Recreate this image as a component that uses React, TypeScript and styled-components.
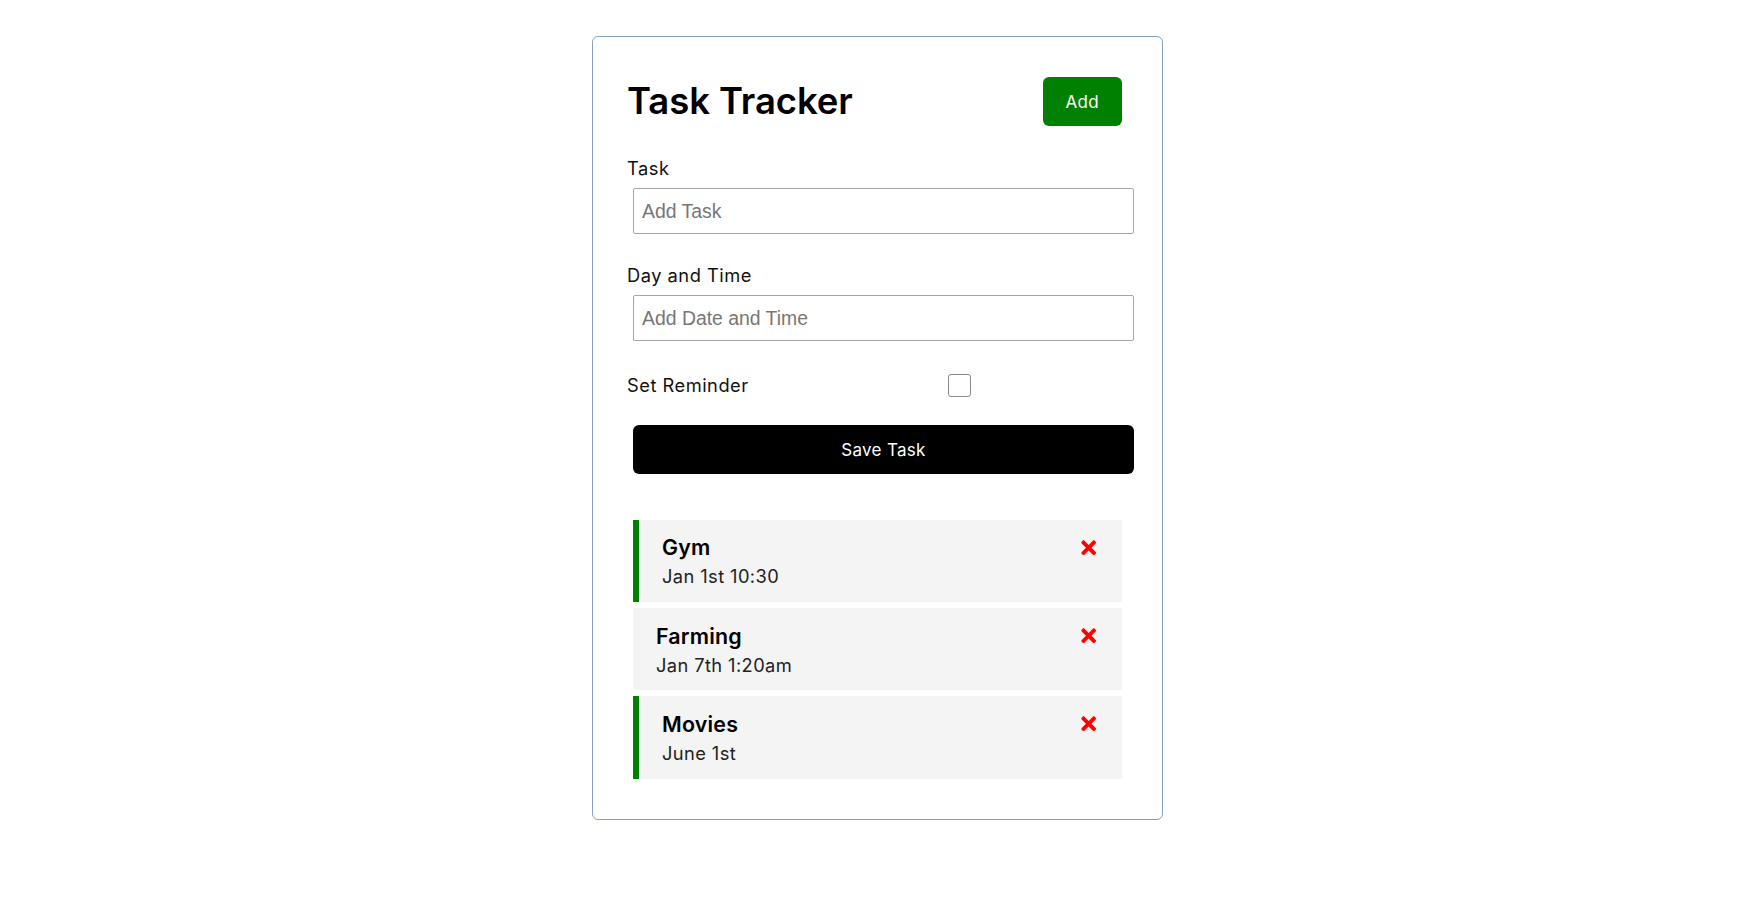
import styled, { createGlobalStyle } from "styled-components";
import { FaTimes } from "react-icons/fa";

type Task = {
  id: number;
  text: string;
  day: string;
  reminder: boolean;
};

const tasks: Task[] = [
  { id: 1, text: "Gym", day: "Jan 1st 10:30", reminder: true },
  { id: 2, text: "Farming", day: "Jan 7th 1:20am", reminder: false },
  { id: 3, text: "Movies", day: "June 1st", reminder: true },
];

const App = () => {
  return (
    <>
      <GlobalStyle />
      <Container>
        <Header>
          <Title>Task Tracker</Title>
          <Button color="green">Add</Button>
        </Header>
        <Form onSubmit={(e) => e.preventDefault()}>
          <FormControl>
            <Label>Task</Label>
            <TextInput type="text" placeholder="Add Task" />
          </FormControl>
          <FormControl>
            <Label>Day and Time</Label>
            <TextInput type="text" placeholder="Add Date and Time" />
          </FormControl>
          <CheckControl>
            <CheckLabel>Set Reminder</CheckLabel>
            <CheckHolder>
              <Checkbox type="checkbox" />
            </CheckHolder>
          </CheckControl>
          <BlockButton type="submit">Save Task</BlockButton>
        </Form>
        <div>
          {tasks.map((task) => (
            <TaskItem key={task.id} reminder={task.reminder}>
              <TaskTitle>
                {task.text}
                <FaTimes style={{ color: "red", cursor: "pointer" }} />
              </TaskTitle>
              <TaskDay>{task.day}</TaskDay>
            </TaskItem>
          ))}
        </div>
      </Container>
    </>
  );
};

export default App;

const GlobalStyle = createGlobalStyle`
  * {
    box-sizing: border-box;
    margin: 0;
    padding: 0;
  }
  body {
    font-family: Inter, "Open Sans", sans-serif;
    background: #fff;
    color: #000;
  }
`;

const Container = styled.div`
  width: 571px;
  margin: 36px auto;
  padding: 34px;
  border: 1px solid #7fa3c6;
  border-radius: 6px;
`;

const Header = styled.header`
  display: flex;
  justify-content: space-between;
  align-items: center;
  margin-bottom: 23px;
`;

const Title = styled.h1`
  font-size: 36.5px;
  font-weight: 600;
  line-height: 1.5;
  letter-spacing: -0.1px;
`;

const Button = styled.button<{ color: string }>`
  display: inline-block;
  background: ${({ color }) => color};
  color: #fff;
  border: none;
  padding: 0 23px;
  height: 49px;
  margin: 6px;
  border-radius: 6px;
  font-family: inherit;
  font-size: 17px;
  letter-spacing: 0.3px;
  cursor: pointer;
`;

const BlockButton = styled.button`
  display: block;
  width: 100%;
  height: 49px;
  margin: 6px 0 6px 6px;
  background: #000;
  color: #fff;
  border: none;
  border-radius: 6px;
  font-family: inherit;
  font-size: 17px;
  letter-spacing: 0.3px;
  cursor: pointer;
`;

const Form = styled.form`
  margin-bottom: 46px;
`;

const FormControl = styled.div`
  display: flow-root;
  margin: 23px 0;
`;

const Label = styled.label`
  display: block;
  font-size: 18.3px;
  line-height: 27px;
  letter-spacing: 0.5px;
  color: #111;
`;

const TextInput = styled.input`
  display: block;
  width: 100%;
  height: 46px;
  margin: 6px 0 5px 6px;
  padding: 3px 8px;
  border: 1.5px solid #a6a6a6;
  border-radius: 2px;
  font-family: "Liberation Sans", Arial, sans-serif;
  font-size: 19.4px;
  outline: none;
  &::placeholder {
    color: #777;
  }
`;

const CheckControl = styled.div`
  display: flex;
  align-items: center;
  justify-content: space-between;
  height: 33px;
  margin: 23px 0;
`;

const CheckLabel = styled.label`
  flex: 1;
  font-size: 18.3px;
  line-height: 27px;
  letter-spacing: 0.5px;
  color: #111;
`;

const CheckHolder = styled.div`
  flex: 2;
  display: flex;
  justify-content: center;
  margin: 0 6px;
`;

const Checkbox = styled.input`
  appearance: none;
  width: 23px;
  height: 23px;
  border: 1.5px solid #8a8a8a;
  border-radius: 3px;
  background: #fff;
  cursor: pointer;
`;

const TaskItem = styled.div<{ reminder: boolean }>`
  background: #f4f4f4;
  margin: 6px;
  padding: 11.4px 23px;
  border-left: ${({ reminder }) => (reminder ? "6px solid green" : "none")};
  cursor: pointer;
`;

const TaskTitle = styled.h3`
  display: flex;
  align-items: center;
  justify-content: space-between;
  font-size: 21.4px;
  font-weight: 600;
  line-height: 32px;
  letter-spacing: 0.2px;
`;

const TaskDay = styled.p`
  font-size: 18.3px;
  line-height: 27.4px;
  letter-spacing: 0.4px;
  color: #222;
`;
